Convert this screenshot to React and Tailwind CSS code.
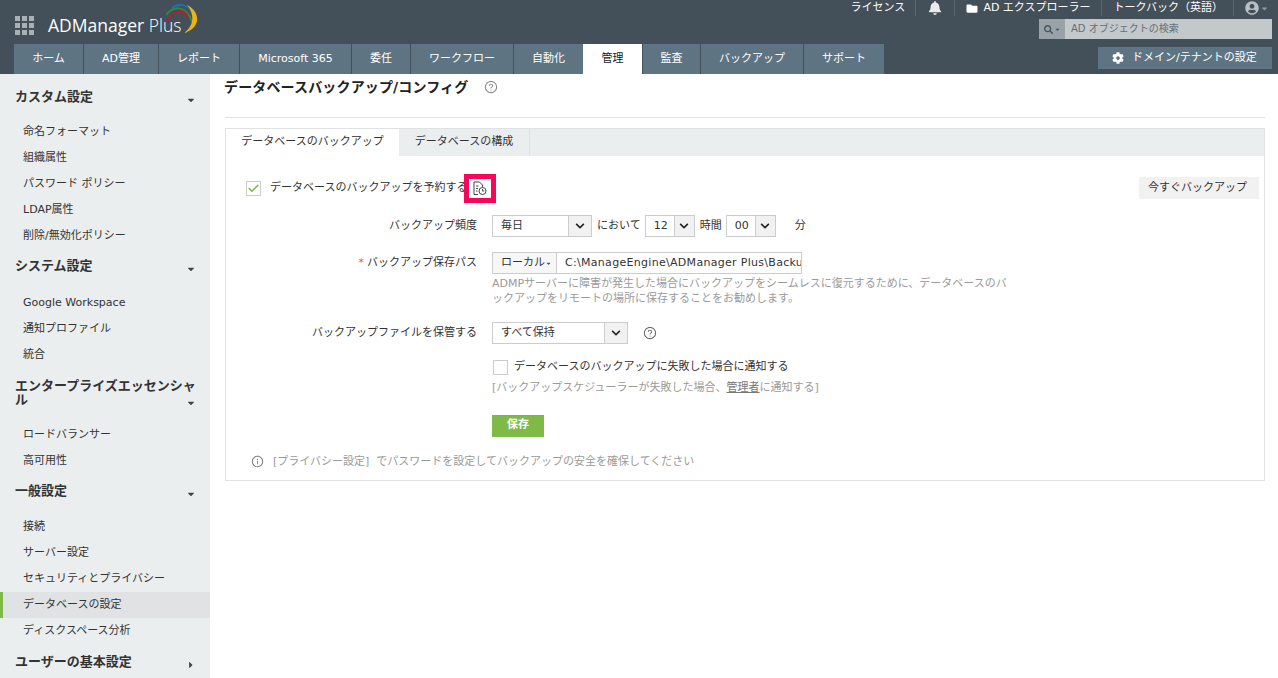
import React from 'react';
import { FaBell, FaFolder, FaCog, FaUserCircle, FaSearch, FaCaretDown, FaCaretRight, FaChevronDown } from 'react-icons/fa';
import { AiOutlineQuestionCircle, AiOutlineInfoCircle } from 'react-icons/ai';
import { Check } from 'lucide-react';

const tabs = [
  { label: 'ホーム', w: 'w-[69px]' },
  { label: 'AD管理', w: 'w-[74px]' },
  { label: 'レポート', w: 'w-[80px]' },
  { label: 'Microsoft 365', w: 'w-[111px]' },
  { label: '委任', w: 'w-[58px]' },
  { label: 'ワークフロー', w: 'w-[102px]' },
  { label: '自動化', w: 'w-[69px]' },
  { label: '管理', w: 'w-[59px]', active: true },
  { label: '監査', w: 'w-[57px]' },
  { label: 'バックアップ', w: 'w-[102px]' },
  { label: 'サポート', w: 'w-[80px]' },
];

const sections = [
  { title: ['カスタム設定'], mt: 'mt-[7px]', mb: 'mb-[2px]', items: ['命名フォーマット', '組織属性', 'パスワード ポリシー', 'LDAP属性', '削除/無効化ポリシー'] },
  { title: ['システム設定'], mt: 'mt-[9px]', mb: 'mb-[3px]', items: ['Google Workspace', '通知プロファイル', '統合'] },
  { title: ['エンタープライズエッセンシャ', 'ル'], mt: 'mt-[7px]', mb: 'mb-[2px]', items: ['ロードバランサー', '高可用性'] },
  { title: ['一般設定'], mt: 'mt-[8px]', mb: 'mb-[3px]', items: ['接続', 'サーバー設定', 'セキュリティとプライバシー', 'データベースの設定', 'ディスクスペース分析'] },
];

function Logo() {
  return (
    <div className="flex items-start">
      <span className="mt-[15px] text-[17.5px] leading-[20px] text-white font-['Open_Sans',sans-serif] whitespace-nowrap">
        <span className="font-medium">ADManager</span> <span className="font-light">Plus</span>
      </span>
      <svg width="33" height="30" viewBox="0 0 33 30" fill="none" className="mt-[4px] -ml-[15px]">
        <path d="M6 4 C12 -1 24 -1 28 13" stroke="#1f6fb2" strokeWidth="2" />
        <path d="M0 11 C6 3 20 -1 26 18" stroke="#2e8b45" strokeWidth="2" />
        <path d="M1 17 C7 7 18 3 22 14" stroke="#b3202c" strokeWidth="2" />
        <path d="M21 1 C35 8 35 24 18 29 C28 22 29 10 21 1 Z" fill="#eeb211" />
      </svg>
    </div>
  );
}

function Header() {
  return (
    <header className="h-[74px] bg-[#434f59] flex flex-col relative">
      <div className="flex justify-between h-[44px]">
        <div className="flex items-start pl-[15px] gap-[14px]">
          <div className="grid grid-cols-3 gap-[2px] mt-[16px]">
            {Array.from({ length: 9 }).map((_, i) => (
              <span key={i} className="w-[5px] h-[5px] bg-[#a9b0b5]" />
            ))}
          </div>
          <Logo />
        </div>
        <div className="flex flex-col items-end pr-[6px]">
          <div className="flex items-center h-[16px] text-[11px] text-white mr-[3px]">
            <span className="pr-[10px] border-r border-[#5a6670] h-[16px] leading-[16px]">ライセンス</span>
            <span className="w-[39px] border-r border-[#5a6670] h-[16px] flex items-center justify-center"><FaBell className="w-[14px] h-[14px] text-[#e8eaec]" /></span>
            <span className="pl-[11px] pr-[10px] border-r border-[#5a6670] h-[16px] flex items-center gap-[5px]"><FaFolder className="w-[12px] h-[11px]" />AD エクスプローラー</span>
            <span className="pl-[12px] pr-[10px] border-r border-[#5a6670] h-[16px] leading-[16px]">トークバック（英語）</span>
            <span className="pl-[11px] flex items-center gap-[1px]"><FaUserCircle className="w-[14px] h-[14px] text-[#b9c0c5]" /><FaCaretDown className="w-[9px] h-[9px] text-[#8e989f]" /></span>
          </div>
          <div className="flex h-[20px] w-[233px] mt-[3px] text-[10px]">
            <div className="w-[26px] bg-[#98a2a8] flex items-center justify-center gap-[1px] text-[#4a555e]">
              <FaSearch className="w-[9px] h-[9px]" /><FaCaretDown className="w-[7px] h-[7px]" />
            </div>
            <div className="flex-1 bg-[#c3c8cb] text-[#666f76] pl-[6px] leading-[20px]">AD オブジェクトの検索</div>
          </div>
        </div>
      </div>
      <div className="flex justify-between items-start pl-[14px] pr-[6px]">
        <nav className="flex gap-px">
          {tabs.map((t) => (
            <div
              key={t.label}
              className={`${t.w} h-[30px] flex items-center justify-center text-[11px] ${t.active ? 'bg-white text-[#222] -ml-px' : 'bg-[#5f7482] text-white'}`}
            >
              {t.label}
            </div>
          ))}
        </nav>
        <div className="w-[174px] h-[22px] mt-[3px] bg-[#5f7482] text-white text-[11px] flex items-center pl-[14px] gap-[8px]">
          <FaCog className="w-[12px] h-[12px]" />
          ドメイン/テナントの設定
        </div>
      </div>
    </header>
  );
}

function Sidebar() {
  return (
    <aside className="w-[210px] shrink-0 bg-[#ebeeef] pt-[8px] overflow-hidden">
      {sections.map((s) => (
        <div key={s.title[0]} className={s.mb}>
          <div className="relative pl-[15px] pr-[10px] py-[8px] text-[13px] leading-[14px] font-bold text-[#333]">
            {s.title.map((l) => <div key={l}>{l}</div>)}
            <FaCaretDown className="absolute right-[14px] bottom-[7px] w-[10px] h-[10px] text-[#444]" />
          </div>
          <ul className={s.mt}>
            {s.items.map((it) => (
              <li
                key={it}
                className={`h-[26px] leading-[26px] text-[11px] text-[#333] ${it === 'データベースの設定' ? 'bg-[#e0e2e3] border-l-[3px] border-[#7fba48] pl-[20px]' : 'pl-[23px]'}`}
              >
                {it}
              </li>
            ))}
          </ul>
        </div>
      ))}
      <div className="relative pl-[15px] py-[8px] text-[13px] leading-[14px] font-bold text-[#333]">
        ユーザーの基本設定
        <FaCaretRight className="absolute right-[14px] bottom-[7px] w-[10px] h-[10px] text-[#444]" />
      </div>
    </aside>
  );
}

function SelectBox({ value, w, arrow = 'w-[23px]' }) {
  return (
    <div className={`${w} h-[22px] border border-[#ccc] flex text-[11px] text-[#333] bg-white`}>
      <span className="flex-1 pl-[8px] leading-[20px]">{value}</span>
      <span className={`${arrow} bg-[#f1f1f1] border-l border-[#ccc] flex items-center justify-center`}>
        <FaChevronDown className="w-[10px] h-[10px] text-[#222]" />
      </span>
    </div>
  );
}

function FileClockIcon() {
  return (
    <svg width="14" height="15" viewBox="0 0 14 15" fill="none" stroke="#444" strokeWidth="1">
      <path d="M5 13.5H1V1H6.5L9.5 4V6" />
      <path d="M3 5H5.5M3 7.5H5M3 10H4.5" />
      <circle cx="9.5" cy="10" r="3.5" />
      <path d="M9.5 8V10H11.2" />
    </svg>
  );
}

function Row({ label, required, className = '', children }) {
  return (
    <div className={`flex items-center ${className}`}>
      <div className="w-[251px] mr-[15px] text-right text-[11px] text-[#333]">
        {required && <span className="text-[#e8504f] mr-[3px]">*</span>}
        {label}
      </div>
      {children}
    </div>
  );
}

function Panel() {
  return (
    <div className="mt-[10px] border border-[#dfe2e3] h-[353px]">
      <div className="flex h-[27px] bg-[#ebeeef] text-[11px] text-[#333]">
        <div className="w-[173px] bg-white flex items-center justify-center">データベースのバックアップ</div>
        <div className="w-[131px] flex items-center justify-center border-r border-[#dfe2e3]">データベースの構成</div>
      </div>
      <div className="relative pt-[20px]">
        <div className="flex items-center justify-between pl-[20px] pr-[5px] h-[24px] text-[11px] text-[#333]">
          <div className="flex items-center">
            <span className="w-[15px] h-[15px] border border-[#ccc] flex items-center justify-center mr-[9px]">
              <Check className="w-[13px] h-[13px] text-[#7fba48]" strokeWidth={3} />
            </span>
            データベースのバックアップを予約する
            <span className="-ml-[3px] w-[32px] h-[29px] border-[5px] border-[#f5075c] flex items-center justify-center bg-white">
              <FileClockIcon />
            </span>
          </div>
          <div className="w-[120px] h-[22px] bg-[#f1f1f1] flex items-center justify-center pr-[3px]">今すぐバックアップ</div>
        </div>

        <Row label="バックアップ頻度" className="mt-[15px]">
          <SelectBox value="毎日" w="w-[100px]" />
          <span className="ml-[5px] text-[11px] text-[#333]">において</span>
          <span className="ml-[4px]"><SelectBox value="12" w="w-[50px]" arrow="w-[20px]" /></span>
          <span className="ml-[5px] text-[11px] text-[#333]">時間</span>
          <span className="ml-[4px]"><SelectBox value="00" w="w-[50px]" arrow="w-[20px]" /></span>
          <span className="ml-[19px] text-[11px] text-[#333]">分</span>
        </Row>

        <Row label="バックアップ保存パス" required className="mt-[15px]">
          <div className="w-[310px] h-[22px] border border-[#ccc] flex text-[11px] text-[#333] overflow-hidden">
            <span className="w-[64px] shrink-0 bg-[#f7f7f7] border-r border-[#ccc] flex items-center pl-[8px]">
              ローカル<FaCaretDown className="w-[7px] h-[7px] text-[#555]" />
            </span>
            <span className="pl-[8px] leading-[19px] whitespace-nowrap tracking-[0.3px]">C:\ManageEngine\ADManager Plus\Backup</span>
          </div>
        </Row>
        <div className="ml-[266px] mt-[2px] whitespace-nowrap text-[11px] leading-[15px] text-[#9a9a9a]">
          ADMPサーバーに障害が発生した場合にバックアップをシームレスに復元するために、データベースのバ<br />
          ックアップをリモートの場所に保存することをお勧めします。
        </div>

        <Row label="バックアップファイルを保管する" className="mt-[16px]">
          <SelectBox value="すべて保持" w="w-[136px]" />
          <AiOutlineQuestionCircle className="ml-[15px] w-[14px] h-[14px] text-[#666]" />
        </Row>

        <div className="ml-[267px] mt-[15px] flex items-center text-[11px] text-[#333]">
          <span className="w-[15px] h-[15px] border border-[#ccc] mr-[6px]" />
          データベースのバックアップに失敗した場合に通知する
        </div>
        <div className="ml-[266px] mt-[4px] text-[11px] leading-[16px] text-[#9a9a9a]">
          [バックアップスケジューラーが失敗した場合、<span className="underline text-[#777]">管理者</span>に通知する]
        </div>
        <div className="ml-[266px] mt-[19px] w-[52px] h-[22px] bg-[#7fba48] text-white text-[11px] font-bold flex items-center justify-center">
          保存
        </div>
        <div className="ml-[25px] mt-[17px] flex items-center text-[11px] text-[#9a9a9a]">
          <AiOutlineInfoCircle className="w-[13px] h-[13px] text-[#777] mr-[9px]" />
          [プライバシー設定]&nbsp;&nbsp;でパスワードを設定してバックアップの安全を確保してください
        </div>
      </div>
    </div>
  );
}

export default function App() {
  return (
    <div className="h-screen overflow-hidden flex flex-col bg-white font-['DejaVu_Sans','Noto_Sans_CJK_JP',sans-serif]">
      <Header />
      <div className="flex flex-1 min-h-0">
        <Sidebar />
        <main className="flex-1 pl-[15px] pr-[13px]">
          <div className="h-[44px] border-b border-[#e3e3e3] flex items-start">
            <h1 className="text-[14px] leading-[26px] font-bold tracking-[0.15px] text-[#222] -ml-px whitespace-nowrap">データベースバックアップ/コンフィグ</h1>
            <AiOutlineQuestionCircle className="ml-[16px] mt-[6px] w-[14px] h-[14px] text-[#888]" />
          </div>
          <Panel />
        </main>
      </div>
    </div>
  );
}
